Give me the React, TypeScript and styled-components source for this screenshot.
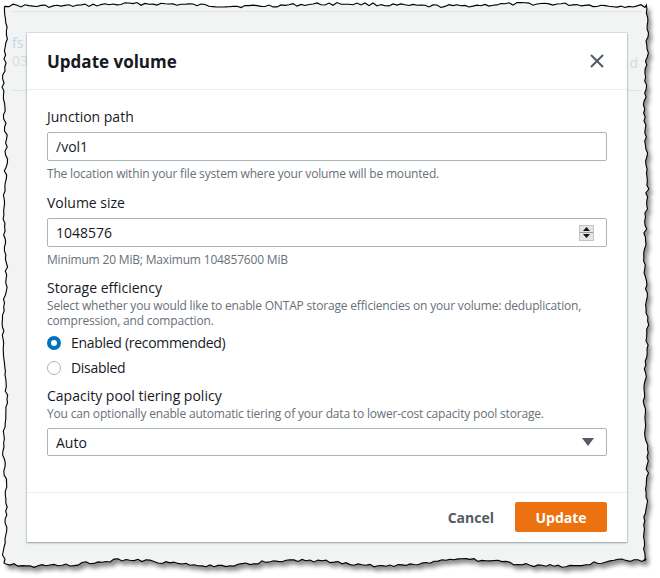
import React from 'react'
import styled, { createGlobalStyle } from 'styled-components'

const GlobalStyle = createGlobalStyle`
  html, body {
    margin: 0;
    padding: 0;
    background: #ffffff;
  }
  body {
    font-family: 'Open Sans', 'Noto Sans', Arial, sans-serif;
    color: #16191f;
  }
  * {
    box-sizing: border-box;
  }
`

const Frame = styled.div`
  position: relative;
  width: 660px;
  height: 578px;
  overflow: hidden;
`

const Edge = styled.svg`
  position: absolute;
  left: 0;
  top: 0;
`

const Backdrop = styled.div`
  position: relative;
  padding: 11px 0 0 12px;
`

const BgRow = styled.div`
  display: flex;
  justify-content: space-between;
  width: 630px;
  height: 80px;
  padding-right: 4px;
  border-top: 1px solid #dde6ee;
  border-bottom: 1px solid #dde6ee;
`

const BgCell = styled.div<{ $top: number }>`
  display: flex;
  flex-direction: column;
  padding-top: ${p => p.$top}px;
  font-size: 14px;
  line-height: 18px;
`

const BgText = styled.span<{ $color: string }>`
  color: ${p => p.$color};
  white-space: nowrap;
`

const Modal = styled.div`
  position: absolute;
  left: 27px;
  top: 33px;
  width: 600px;
  height: 509px;
  display: flex;
  flex-direction: column;
  background: #ffffff;
  box-shadow: 0 0 0 1px rgba(0, 28, 36, 0.08), 0 1px 2px rgba(0, 28, 36, 0.35);
`

const Header = styled.div`
  display: flex;
  align-items: center;
  justify-content: space-between;
  height: 57px;
  padding: 0 20px;
  border-bottom: 1px solid #eaeded;
`

const Title = styled.h2`
  margin: 0;
  font-size: 17px;
  font-weight: 700;
  color: #16191f;
`

const CloseButton = styled.button`
  display: flex;
  padding: 0;
  margin-right: 3px;
  border: none;
  background: none;
  cursor: pointer;
`

const Body = styled.div`
  flex: 1;
  padding: 17px 20px 0;
  display: flex;
  flex-direction: column;
`

const Field = styled.div<{ $gap: number }>`
  display: flex;
  flex-direction: column;
  margin-top: ${p => p.$gap}px;
`

const Label = styled.label`
  font-size: 14px;
  line-height: 20px;
  color: #16191f;
`

const Hint = styled.div<{ $lh: number; $mt: number }>`
  font-size: 12px;
  letter-spacing: -0.18px;
  line-height: ${p => p.$lh}px;
  margin-top: ${p => p.$mt}px;
  color: #687078;
`

const Shell = styled.div<{ $mt: number; $h: number }>`
  display: flex;
  align-items: center;
  height: ${p => p.$h}px;
  margin-top: ${p => p.$mt}px;
  padding: 0 12px 0 8px;
  border: 1px solid #aab7b8;
  border-radius: 2px;
  background: #ffffff;
`

const TextInput = styled.input`
  flex: 1;
  min-width: 0;
  border: none;
  outline: none;
  padding: 0;
  font: inherit;
  font-size: 14px;
  color: #16191f;
  background: transparent;
`

const SelectText = styled.span`
  flex: 1;
  font-size: 14px;
  color: #16191f;
`

const Spinner = styled.div`
  display: flex;
  flex-direction: column;
  width: 15px;
  height: 16px;
  border: 1px solid #c4c4c4;
  background: #e4e4e4;
`

const SpinHalf = styled.div<{ $down?: boolean }>`
  flex: 1;
  display: flex;
  align-items: center;
  justify-content: center;
  border-top: ${p => (p.$down ? '1px solid #9a9a9a' : 'none')};
`

const RadioGroup = styled.div`
  display: flex;
  flex-direction: column;
  margin-top: 2px;
`

const RadioRow = styled.label`
  display: flex;
  align-items: center;
  gap: 10px;
  height: 25px;
  font-size: 14px;
  letter-spacing: -0.3px;
  color: #16191f;
`

const RadioDot = styled.span<{ $checked: boolean }>`
  width: 14px;
  height: 14px;
  border-radius: 50%;
  flex: none;
  border: ${p => (p.$checked ? '4.5px solid #0073bb' : '1.5px solid #aab7b8')};
  background: #ffffff;
`

const Footer = styled.div`
  display: flex;
  justify-content: flex-end;
  align-items: center;
  padding: 9px 20px 10px;
  border-top: 1px solid #eaeded;
`

const LinkButton = styled.button`
  height: 30px;
  padding: 0 21px 0 20px;
  border: none;
  background: none;
  font: inherit;
  font-size: 14px;
  font-weight: 700;
  color: #545b64;
  cursor: pointer;
`

const PrimaryButton = styled.button`
  height: 30px;
  width: 92px;
  border: none;
  border-radius: 2px;
  background: #ec7211;
  font: inherit;
  font-size: 14px;
  font-weight: 700;
  color: #ffffff;
  cursor: pointer;
`

// torn paper edge round the screenshot
function tornPath() {
  let s = 17
  const rnd = () => {
    s = (s * 9301 + 49297) % 233280
    return s / 233280 - 0.5
  }
  const L = 5
  const T = 5
  const R = 646
  const B = 563
  const pts: string[] = []
  for (let x = L; x < R; x += 4) {
    pts.push(`${x},${(T + rnd() * 3 + Math.sin(x / 31) * 1.2).toFixed(1)}`)
  }
  for (let y = T; y < B; y += 4) {
    pts.push(`${(R + rnd() * 3 + Math.sin(y / 23) * 1.5).toFixed(1)},${y}`)
  }
  for (let x = R; x > L; x -= 4) {
    pts.push(`${x},${(B + rnd() * 3 + Math.sin(x / 27) * 3).toFixed(1)}`)
  }
  for (let y = B; y > T; y -= 4) {
    pts.push(`${(L + rnd() * 3 + Math.sin(y / 19) * 1.5).toFixed(1)},${y}`)
  }
  return 'M' + pts.join(' L') + ' Z'
}

const edgePath = tornPath()

export default function App() {
  return (
    <>
      <GlobalStyle />
      <Frame>
        <Edge width={660} height={578} viewBox='0 0 660 578'>
          <defs>
            <filter id='torn-shadow' x='-5%' y='-5%' width='110%' height='110%'>
              <feDropShadow dx='3' dy='4' stdDeviation='2.2' floodColor='#000' floodOpacity='0.45' />
            </filter>
          </defs>
          <path d={edgePath} fill='#f2f3f3' stroke='#000' strokeWidth='1.1' filter='url(#torn-shadow)' />
        </Edge>

        <Backdrop>
          <BgRow>
            <BgCell $top={22}>
              <BgText $color='#c2d6e8'>fs</BgText>
              <BgText $color='#d6dee5'>03</BgText>
            </BgCell>
            <BgCell $top={42}>
              <BgText $color='#d6dadc'>d</BgText>
            </BgCell>
          </BgRow>
        </Backdrop>

        <Modal>
          <Header>
            <Title>Update volume</Title>
            <CloseButton aria-label='Close'>
              <svg width='14' height='14' viewBox='0 0 14 14'>
                <path d='M1 1 L13 13 M13 1 L1 13' stroke='#545b64' strokeWidth='2' fill='none' />
              </svg>
            </CloseButton>
          </Header>

          <Body>
            <Field $gap={0}>
              <Label>Junction path</Label>
              <Shell $mt={5} $h={29}>
                <TextInput defaultValue='/vol1' />
              </Shell>
              <Hint $lh={16} $mt={5}>
                The location within your file system where your volume will be mounted.
              </Hint>
            </Field>

            <Field $gap={11}>
              <Label>Volume size</Label>
              <Shell $mt={5} $h={29}>
                <TextInput defaultValue='1048576' />
                <Spinner>
                  <SpinHalf>
                    <svg width='7' height='4' viewBox='0 0 7 4'>
                      <path d='M0 4 L3.5 0 L7 4 Z' fill='#111' />
                    </svg>
                  </SpinHalf>
                  <SpinHalf $down>
                    <svg width='7' height='4' viewBox='0 0 7 4'>
                      <path d='M0 0 L3.5 4 L7 0 Z' fill='#111' />
                    </svg>
                  </SpinHalf>
                </Spinner>
              </Shell>
              <Hint $lh={16} $mt={5}>
                Minimum 20 MiB; Maximum 104857600 MiB
              </Hint>
            </Field>

            <Field $gap={10}>
              <Label>Storage efficiency</Label>
              <Hint $lh={15} $mt={0}>
                Select whether you would like to enable ONTAP storage efficiencies on your volume: deduplication,
                compression, and compaction.
              </Hint>
              <RadioGroup>
                <RadioRow>
                  <RadioDot $checked />
                  Enabled (recommended)
                </RadioRow>
                <RadioRow>
                  <RadioDot $checked={false} />
                  Disabled
                </RadioRow>
              </RadioGroup>
            </Field>

            <Field $gap={6}>
              <Label>Capacity pool tiering policy</Label>
              <Hint $lh={15} $mt={0}>
                You can optionally enable automatic tiering of your data to lower-cost capacity pool storage.
              </Hint>
              <Shell $mt={7} $h={28}>
                <SelectText>Auto</SelectText>
                <svg width='12' height='8' viewBox='0 0 12 8'>
                  <path d='M0 0 L12 0 L6 8 Z' fill='#545b64' />
                </svg>
              </Shell>
            </Field>
          </Body>

          <Footer>
            <LinkButton>Cancel</LinkButton>
            <PrimaryButton>Update</PrimaryButton>
          </Footer>
        </Modal>
      </Frame>
    </>
  )
}
